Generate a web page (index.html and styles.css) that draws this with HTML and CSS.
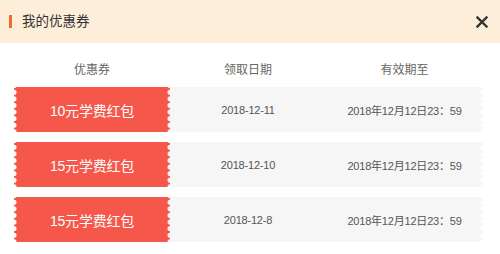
FILE: index.html
```html
<!DOCTYPE html>
<html lang="zh-CN">
<head>
<meta charset="utf-8">
<title>我的优惠券</title>
<link rel="stylesheet" href="styles.css">
</head>
<body>
<div class="dialog">
  <div class="dlg-head">
    <span class="bar"></span>
    <h2 class="title">我的优惠券</h2>
    <button class="close" aria-label="关闭">
      <svg width="12" height="12" viewBox="0 0 12 12"><path d="M1.5 1.5 L10.5 10.5 M10.5 1.5 L1.5 10.5" stroke="#333" stroke-width="2.4" stroke-linecap="square" fill="none"/></svg>
    </button>
  </div>
  <div class="table">
    <div class="thead">
      <span>优惠券</span><span>领取日期</span><span>有效期至</span>
    </div>
    <div class="row">
      <div class="ticket">10元学费红包</div>
      <div class="info"><span class="date">2018-12-11</span><span class="date">2018年12月12日23：59</span></div>
    </div>
    <div class="row">
      <div class="ticket">15元学费红包</div>
      <div class="info"><span class="date">2018-12-10</span><span class="date">2018年12月12日23：59</span></div>
    </div>
    <div class="row">
      <div class="ticket">15元学费红包</div>
      <div class="info"><span class="date">2018-12-8</span><span class="date">2018年12月12日23：59</span></div>
    </div>
  </div>
</div>
</body>
</html>
```

FILE: styles.css
```css
* { box-sizing: border-box; }
html, body { margin: 0; padding: 0; background: #fff; }
body {
  font-family: "Liberation Sans", "Noto Sans CJK SC", sans-serif;
  color: #333;
}
.dialog { width: 500px; }
.dlg-head {
  height: 43px;
  background: #fdeed9;
  display: flex;
  align-items: center;
  padding: 0 12px 0 9px;
}
.bar {
  width: 3px;
  height: 13px;
  background: #f36a2c;
  margin-right: 10px;
}
.title {
  margin: 0;
  font-size: 13.5px;
  font-weight: normal;
  color: #333;
  flex: 1;
  line-height: 18px;
}
.close {
  border: 0;
  background: none;
  padding: 0;
  width: 12px;
  height: 12px;
  display: flex;
  cursor: pointer;
}
.table {
  margin: 0 17px 0 14px;
  display: flex;
  flex-direction: column;
  gap: 10px;
}
.thead {
  display: grid;
  grid-template-columns: 156px 156px 157px;
  padding: 18px 0 0;
  margin-bottom: -2px;
  line-height: 18px;
  font-size: 12px;
  color: #666;
  text-align: center;
}
.row {
  display: grid;
  grid-template-columns: 156px 1fr;
  height: 45px;
}
.ticket {
  display: flex;
  align-items: center;
  justify-content: center;
  color: #fff;
  font-size: 14px;
  letter-spacing: -0.2px;
  background:
    radial-gradient(circle at 0 50%, #fff 2.2px, rgba(255,255,255,0) 2.9px) 0 2px / 4px 6.6px repeat-y,
    radial-gradient(circle at 100% 50%, #f6f6f6 2.2px, rgba(246,246,246,0) 2.9px) 100% 2px / 4px 6.6px repeat-y,
    #f5584a;
}
.info {
  display: grid;
  grid-template-columns: 156px 1fr;
  align-items: center;
  text-align: center;
  background:
    radial-gradient(circle at 100% 50%, #fff 2.2px, rgba(255,255,255,0) 2.9px) 100% 2px / 4px 6.6px repeat-y,
    #f6f6f6;
}
.date {
  font-size: 11px;
  color: #555;
  letter-spacing: -0.2px;
}
```
